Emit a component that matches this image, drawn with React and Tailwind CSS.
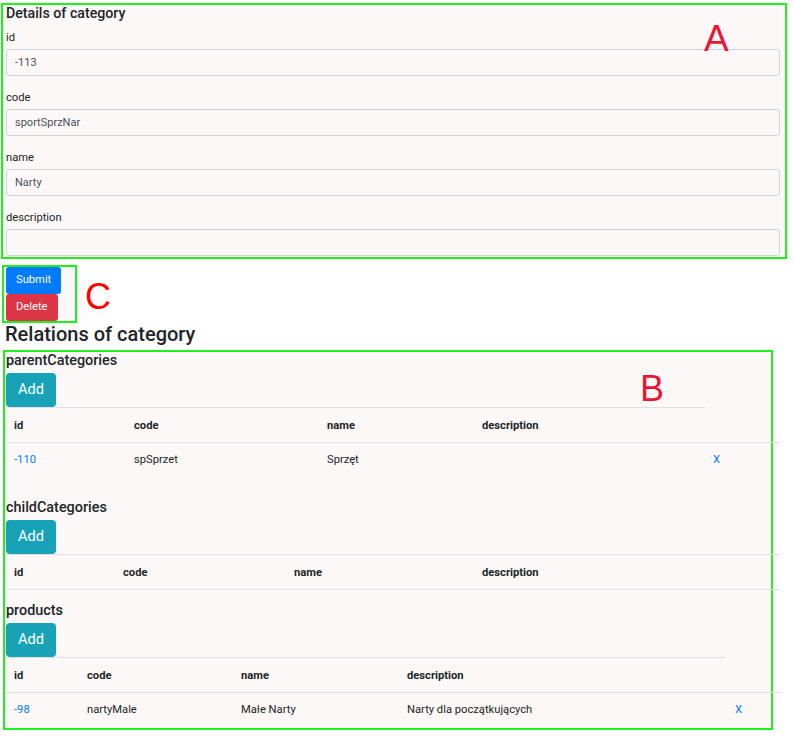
import React from 'react'

const fields = [
  { label: 'id', value: '-113' },
  { label: 'code', value: 'sportSprzNar' },
  { label: 'name', value: 'Narty' },
  { label: 'description', value: '' },
]

function Field({ label, value, first }) {
  return (
    <div className={first ? 'mt-[4px]' : 'mt-[10px]'}>
      <label className="block text-[11.2px] leading-[19px] pt-[2px] mb-[2px]">{label}</label>
      <input
        readOnly
        value={value}
        className="block w-full h-[27px] border border-[#ced4da] rounded-[3px] bg-transparent pl-[8px] text-[11px] text-[#495057] outline-none"
      />
    </div>
  )
}

function Section({ title, first, cols, topLine, rows, gap }) {
  return (
    <div className={first ? '-mt-[5px]' : gap}>
      <h3 className="text-[14.4px] leading-[17px] font-medium mb-[4px]">{title}</h3>
      <button className="h-[34px] px-[12px] bg-[#17a2b8] text-white text-[14.6px] rounded-[4px]">Add</button>
      <div className={`h-px bg-[#dee2e6] ${topLine}`} />
      <div className="flex items-center h-[35px] pt-[3px] w-[774px] border-b border-[#dee2e6] text-[11.2px] font-bold">
        {cols.map(c => (
          <div key={c.name} className={`pl-[8px] ${c.w}`}>{c.name}</div>
        ))}
      </div>
      {rows.map(r => (
        <div key={r[0]} className="flex items-center h-[35px] w-[774px] text-[11.2px]">
          {cols.map((c, i) => (
            <div key={c.name} className={`pl-[8px] ${c.w} ${i === 0 ? 'text-[#007bff]' : ''}`}>{r[i]}</div>
          ))}
          <div className="pl-[8px] text-[#007bff]">X</div>
        </div>
      ))}
    </div>
  )
}

export default function App() {
  return (
    <div className="relative w-[793px] min-h-[747px] bg-white font-['Roboto',sans-serif] text-[#212529] overflow-hidden">
      {/* A */}
      <div className="ml-[3px] mt-[5px] w-[782px] bg-[#fcf8f7] ring-2 ring-[#1ef01e] pl-[3px] pr-[5px] pb-px">
        <h2 className="text-[14.2px] leading-[17px] font-medium mt-px">Details of category</h2>
        {fields.map((f, i) => <Field key={f.label} {...f} first={i === 0} />)}
      </div>

      {/* C */}
      <div className="ml-[4px] mt-[10px] w-[71px] bg-[#fcf8f7] ring-2 ring-[#1ef01e] pl-[2px] flex flex-col items-start">
        <button className="h-[27px] px-[10px] bg-[#007bff] text-white text-[11.2px] rounded-[3px]">Submit</button>
        <button className="h-[27px] px-[10px] bg-[#dc3545] text-white text-[11.2px] rounded-[3px]">Delete</button>
      </div>

      <h2 className="ml-[5px] mt-[1px] text-[20px] leading-[24px] font-medium">Relations of category</h2>

      {/* B */}
      <div className="ml-[5px] mt-[11px] w-[766px] bg-[#fcf8f7] ring-2 ring-[#1ef01e] pl-px">
        <Section
          first
          title="parentCategories"
          topLine="w-[699px]"
          cols={[
            { name: 'id', w: 'w-[120px]' },
            { name: 'code', w: 'w-[193px]' },
            { name: 'name', w: 'w-[155px]' },
            { name: 'description', w: 'w-[231px]' },
          ]}
          rows={[['-110', 'spSprzet', 'Sprzęt', '']]}
        />
        <Section
          gap="mt-[21px]"
          title="childCategories"
          topLine="w-[774px]"
          cols={[
            { name: 'id', w: 'w-[109px]' },
            { name: 'code', w: 'w-[171px]' },
            { name: 'name', w: 'w-[188px]' },
            { name: 'description', w: 'w-[231px]' },
          ]}
          rows={[]}
        />
        <Section
          gap="mt-[12px]"
          title="products"
          topLine="w-[719px]"
          cols={[
            { name: 'id', w: 'w-[73px]' },
            { name: 'code', w: 'w-[154px]' },
            { name: 'name', w: 'w-[166px]' },
            { name: 'description', w: 'w-[328px]' },
          ]}
          rows={[['-98', 'nartyMale', 'Małe Narty', 'Narty dla początkujących']]}
        />
      </div>

      {/* annotation letters */}
      <div className="absolute left-[704px] top-[20px] text-[37px] leading-none text-[#ea1535] font-['Liberation_Sans',sans-serif]">A</div>
      <div className="absolute left-[640px] top-[371px] text-[36px] leading-none text-[#ea1535] font-['Liberation_Sans',sans-serif]">B</div>
      <div className="absolute left-[85px] top-[279px] text-[36px] leading-none text-[#ff0000] font-['Liberation_Sans',sans-serif]">C</div>
    </div>
  )
}
